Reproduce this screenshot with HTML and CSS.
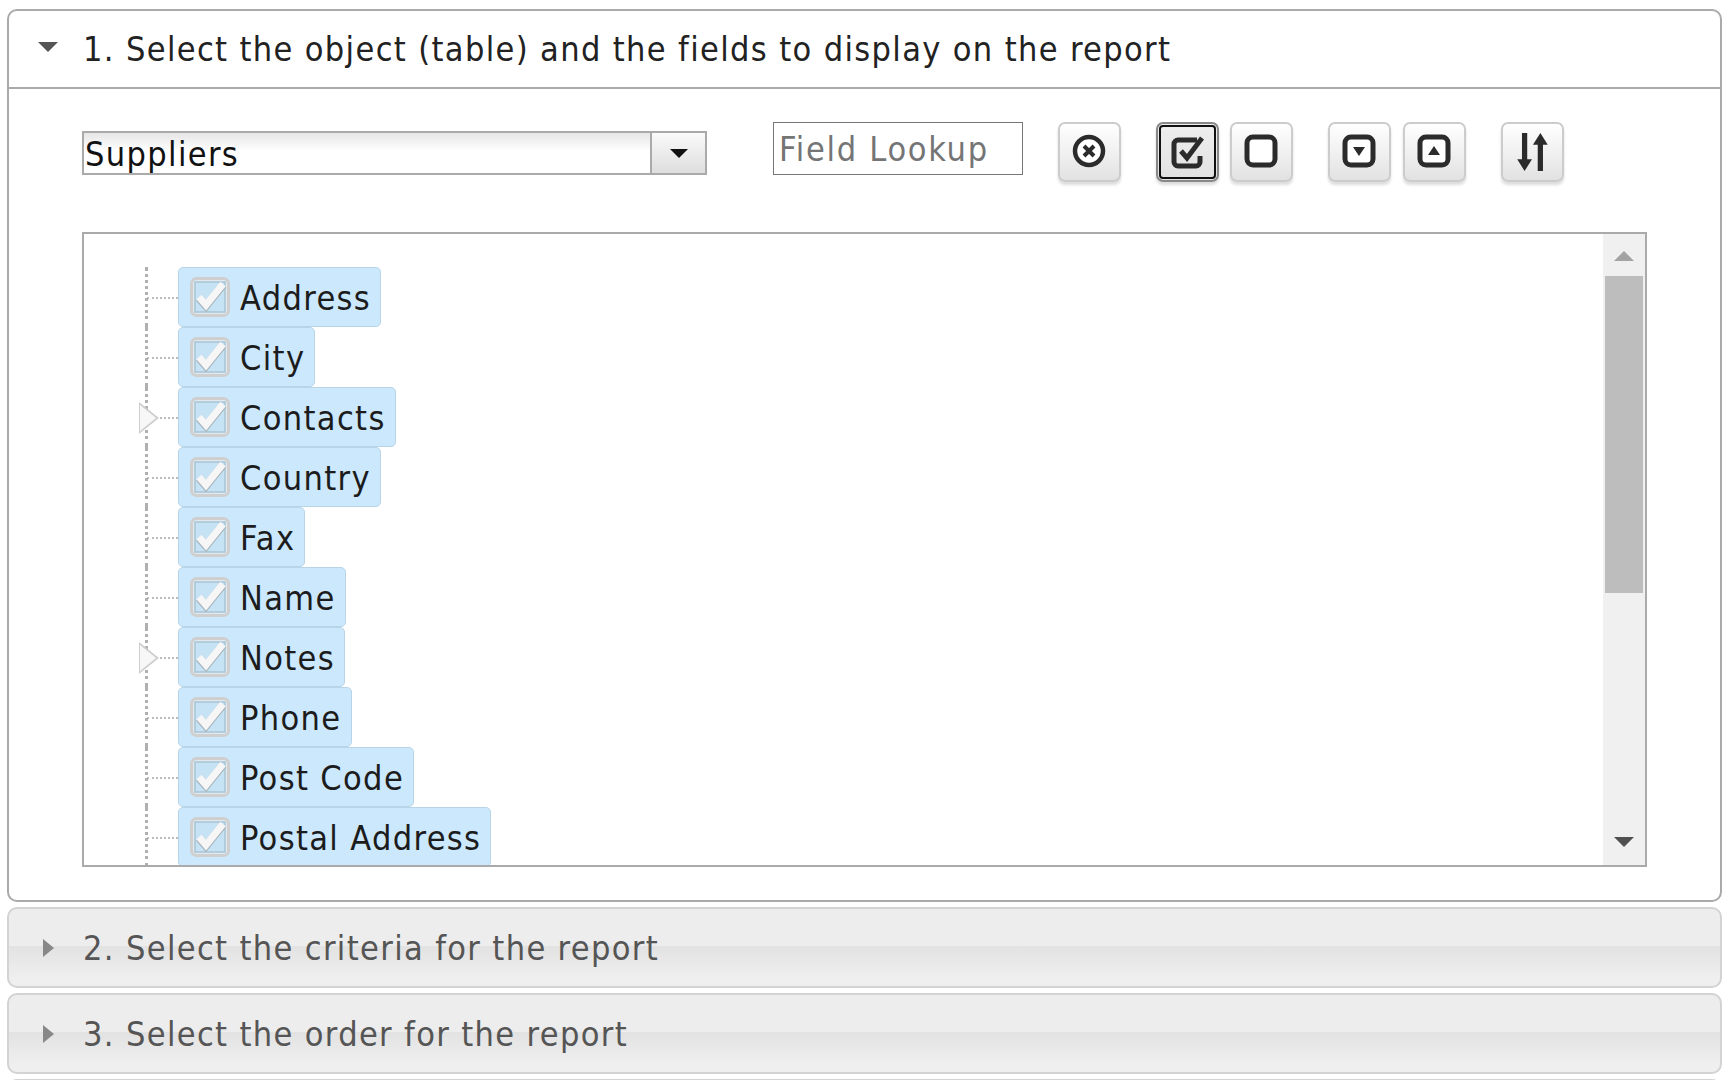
FILE: index.html
```html
<!DOCTYPE html>
<html lang="en">
<head>
<meta charset="utf-8">
<title>Report wizard</title>
<link rel="stylesheet" href="styles.css">
</head>
<body>
<svg class="defs" width="0" height="0">
  <symbol id="cb" viewBox="0 0 42 42">
    <rect x="2.5" y="2.5" width="37" height="37" rx="5" fill="#dfe9ef" stroke="#cfcfcf" stroke-width="3"/>
    <rect x="6" y="6" width="30" height="30" fill="#c5e3f5" stroke="#a9c3d3" stroke-width="1.5"/>
    <path d="M10 22l7 8L34 9" fill="none" stroke="#a8b4bb" stroke-width="8"/>
    <path d="M10 21l7 8L34 8" fill="none" stroke="#f6f6f6" stroke-width="7"/>
  </symbol>
</svg>
<main class="accordion">
  <section class="panel open">
    <h2 class="head"><span class="tri tri-open"></span>1. Select the object (table) and the fields to display on the report</h2>
    <div class="body">
      <div class="toolbar">
        <div class="combo"><span class="combo-text">Suppliers</span><span class="combo-btn"><i></i></span></div>
        <div class="lookup">Field Lookup</div>
        <div class="tools">
          <button class="tool t-clear"><svg width="36" height="36" viewBox="0 0 36 36"><circle cx="17" cy="17" r="14" fill="#fff" stroke="#2b2b2b" stroke-width="4.5"/><path d="M12 12l10 10M22 12L12 22" stroke="#2b2b2b" stroke-width="4"/></svg></button>
          <button class="tool t-check active"><svg width="40" height="40" viewBox="0 0 40 40"><path d="M29 8H10a4 4 0 0 0-4 4v18a4 4 0 0 0 4 4h18a4 4 0 0 0 4-4v-6" fill="none" stroke="#2b2b2b" stroke-width="5"/><path d="M13 19l6 7L34 6" fill="none" stroke="#2b2b2b" stroke-width="5"/></svg></button>
          <button class="tool t-none"><svg width="36" height="36" viewBox="0 0 36 36"><rect x="3" y="3" width="28" height="28" rx="6" fill="#fff" stroke="#2b2b2b" stroke-width="5"/></svg></button>
          <button class="tool t-down"><svg width="36" height="36" viewBox="0 0 36 36"><rect x="3" y="3" width="28" height="28" rx="6" fill="#fff" stroke="#2b2b2b" stroke-width="5"/><path d="M11 13h12l-6 9z" fill="#2b2b2b"/></svg></button>
          <button class="tool t-up"><svg width="36" height="36" viewBox="0 0 36 36"><rect x="3" y="3" width="28" height="28" rx="6" fill="#fff" stroke="#2b2b2b" stroke-width="5"/><path d="M11 21h12l-6-9z" fill="#2b2b2b"/></svg></button>
          <button class="tool t-sort"><svg width="38" height="42" viewBox="0 0 36 40"><path d="M10 2v28" stroke="#2b2b2b" stroke-width="5"/><path d="M3 27h14l-7 11z" fill="#2b2b2b"/><path d="M25 38V12" stroke="#2b2b2b" stroke-width="5"/><path d="M18 13h14L25 2z" fill="#2b2b2b"/></svg></button>
        </div>
      </div>
      <div class="treebox">
        <ul class="tree">
          <li class="node"><div class="item"><svg class="cb"><use href="#cb"/></svg>Address</div></li>
          <li class="node"><div class="item"><svg class="cb"><use href="#cb"/></svg>City</div></li>
          <li class="node kids"><span class="exp"></span><div class="item"><svg class="cb"><use href="#cb"/></svg>Contacts</div></li>
          <li class="node"><div class="item"><svg class="cb"><use href="#cb"/></svg>Country</div></li>
          <li class="node"><div class="item"><svg class="cb"><use href="#cb"/></svg>Fax</div></li>
          <li class="node"><div class="item"><svg class="cb"><use href="#cb"/></svg>Name</div></li>
          <li class="node kids"><span class="exp"></span><div class="item"><svg class="cb"><use href="#cb"/></svg>Notes</div></li>
          <li class="node"><div class="item"><svg class="cb"><use href="#cb"/></svg>Phone</div></li>
          <li class="node"><div class="item"><svg class="cb"><use href="#cb"/></svg>Post Code</div></li>
          <li class="node"><div class="item"><svg class="cb"><use href="#cb"/></svg>Postal Address</div></li>
        </ul>
        <div class="scrollbar">
          <span class="arrow up"></span>
          <span class="thumb"></span>
          <span class="arrow down"></span>
        </div>
      </div>
    </div>
  </section>
  <section class="panel closed"><h2 class="head"><span class="tri tri-closed"></span>2. Select the criteria for the report</h2></section>
  <section class="panel closed"><h2 class="head"><span class="tri tri-closed"></span>3. Select the order for the report</h2></section>
  <section class="panel closed"></section>
</main>
</body>
</html>
```
FILE: styles.css
```css
* { box-sizing: border-box; }
html, body { margin: 0; height: 1080px; overflow: hidden; background: #fff; }
body { font-family: "DejaVu Sans Condensed", "DejaVu Sans", Verdana, sans-serif; font-stretch: condensed; letter-spacing: 1.35px; color: #222; padding: 9px 6px 0 7px; }
.defs { position: absolute; }
.accordion { display: flex; flex-direction: column; gap: 5px; }
.panel { border: 2px solid #aaa; border-radius: 10px; overflow: hidden; flex: none; }
.panel.open { height: 893px; background: #fff; }
.panel.closed { height: 81px; border-color: #d3d3d3; color: #555;
  background: linear-gradient(#ededed 0 48%, #e2e2e2 48%, #efefef 90%); }
.head { margin: 0; height: 77px; display: flex; align-items: center; padding-left: 74px; font-size: 34px; font-weight: 400; position: relative; white-space: nowrap; }
.panel.open .head { height: 78px; border-bottom: 2px solid #aaa; }
.tri { position: absolute; width: 0; height: 0; }
.tri-open { left: 29px; top: 31px; border-left: 10px solid transparent; border-right: 10px solid transparent; border-top: 10px solid #555; }
.tri-closed { left: 34px; top: 30px; border-top: 9px solid transparent; border-bottom: 9px solid transparent; border-left: 11px solid #888; }
.body { padding: 33px 0 0 73px; }
.toolbar { display: flex; align-items: flex-start; height: 110px; }
.combo { width: 625px; height: 44px; margin-top: 9px; border: 2px solid #aaa; display: flex; background: linear-gradient(#e6e6e6, #fff 45%); }
.combo-text { flex: 1; font-size: 34px; line-height: 42px; padding-left: 1px; color: #111; }
.combo-btn { width: 55px; border-left: 2px solid #aaa; background: linear-gradient(#fafafa, #dedede); display: flex; align-items: center; justify-content: center; }
.combo-btn i { border-left: 9px solid transparent; border-right: 9px solid transparent; border-top: 9px solid #111; }
.lookup { width: 250px; height: 53px; margin-left: 66px; border: 1px solid #767676; font-size: 34px; line-height: 52px; padding-left: 5px; color: #757575; letter-spacing: 1.7px; }
.tools { display: flex; margin-left: 35px; }
.tool { width: 63px; height: 60px; padding: 0; border: 2px solid #ccc; border-radius: 7px; background: linear-gradient(#fff, #e2e2e2); box-shadow: 0 3px 3px #ddd; display: flex; align-items: center; justify-content: center; }
.t-check { margin-left: 35px; }
.t-none { margin-left: 11px; }
.t-down { margin-left: 35px; }
.t-up { margin-left: 12px; }
.t-sort { margin-left: 35px; }
.tool.active { border-color: #888; outline: 2px solid #111; outline-offset: -5px; background: linear-gradient(#eee, #e2e2e2); }
.treebox { width: 1565px; height: 635px; border: 2px solid #aaa; display: flex; overflow: hidden; position: relative; }
.tree { flex: 1; margin: 0; padding: 33px 0 0 63px; list-style: none; }
.node { height: 60px; position: relative; padding-left: 31px; display: flex; }
.node::before { content: ""; position: absolute; left: 0; width: 31px; top: 30px; border-top: 2px dotted #bbb; }
.node::after { content: ""; position: absolute; left: -2px; top: 0; bottom: 0; border-left: 3px dotted #b0b0b0; }
.item { height: 60px; display: flex; align-items: center; padding: 1px 9px 0 10px; background: #cbe8fd; border: 1px solid #b8d5e8; border-radius: 5px; font-size: 34px; color: #1c1c1c; white-space: nowrap; }
.cb { width: 42px; height: 42px; margin: -2px 9px 0 0; flex: none; }
.exp { position: absolute; left: -8px; top: 15px; width: 20px; height: 32px; background: #cfcfcf; clip-path: polygon(0 0, 100% 50%, 0 100%); z-index: 1; }
.exp::after { content: ""; position: absolute; left: 1px; top: 3px; width: 16px; height: 26px; background: #f7f7f7; clip-path: polygon(0 0, 100% 50%, 0 100%); }
.scrollbar { width: 42px; flex: none; background: #f0f0f0; display: flex; flex-direction: column; align-items: center; padding: 0 3px 2px 2px; }
.thumb { width: 38px; height: 317px; background: #bdbdbd; flex: none; }
.arrow { width: 0; height: 0; border-left: 10px solid transparent; border-right: 10px solid transparent; flex: none; }
.arrow.up { border-bottom: 10px solid #a3a3a3; margin: 17px 0 15px; }
.arrow.down { border-top: 10px solid #505050; margin-top: auto; margin-bottom: 16px; }
```
